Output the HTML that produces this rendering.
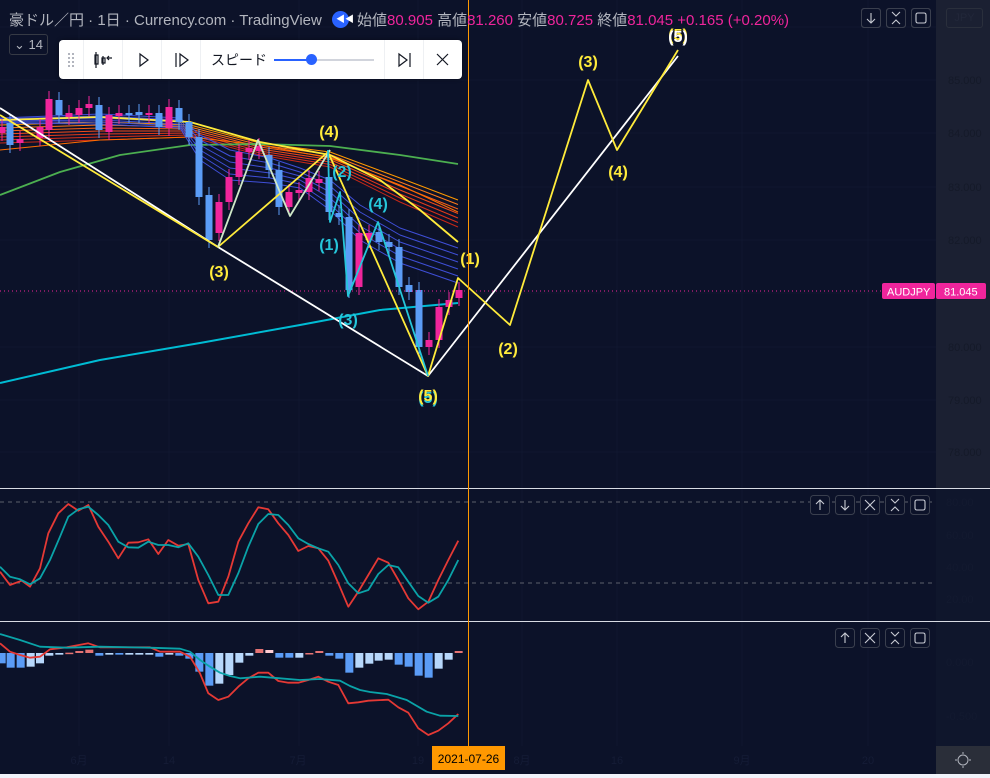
<!DOCTYPE html>
<html><head><meta charset="utf-8"><style>
html,body{margin:0;padding:0;background:#0c1229;width:990px;height:778px;overflow:hidden;font-family:"Liberation Sans","Noto Sans CJK JP",sans-serif}
#w{position:relative;width:990px;height:778px}
svg{position:absolute;left:0;top:0}
.leg{position:absolute;left:9px;top:9px;color:#b2b5be;font-size:15px;white-space:nowrap;letter-spacing:0}
.leg .p{color:#f0259c}
.tb{position:absolute;left:59px;top:40px;width:403px;height:39px;background:#fff;border-radius:4px;box-shadow:0 0 4px rgba(0,0,0,.4)}
.btn{position:absolute;width:18px;height:18px;border:1px solid #3a3f4e;border-radius:3px}
</style></head><body><div id="w">
<svg id="s" width="990" height="778" viewBox="0 0 990 778" xmlns="http://www.w3.org/2000/svg"></svg>
<div class="leg">豪ドル／円 · 1日 · Currency.com · TradingView <span style="display:inline-block;width:17px;height:17px;border-radius:50%;background:#2962ff;vertical-align:-3px;margin:0 8px 0 6px;position:relative"><span style="position:absolute;left:4px;top:4px;font-size:9px;color:#fff;line-height:9px">◀◀</span></span>始値<span class="p">80.905</span> 高値<span class="p">81.260</span> 安値<span class="p">80.725</span> 終値<span class="p">81.045</span> <span class="p">+0.165 (+0.20%)</span></div>
<div style="position:absolute;left:9px;top:34px;width:37px;height:19px;border:1px solid #363a45;border-radius:3px;color:#b2b5be;font-size:13px;line-height:19px;text-align:center">⌄ 14</div>
<div class="tb">
<div style="position:absolute;left:24px;top:0;width:1px;height:39px;background:#eef0f3"></div>
<div style="position:absolute;left:63px;top:0;width:1px;height:39px;background:#eef0f3"></div>
<div style="position:absolute;left:102px;top:0;width:1px;height:39px;background:#eef0f3"></div>
<div style="position:absolute;left:141px;top:0;width:1px;height:39px;background:#eef0f3"></div>
<div style="position:absolute;left:325px;top:0;width:1px;height:39px;background:#eef0f3"></div>
<div style="position:absolute;left:364px;top:0;width:1px;height:39px;background:#eef0f3"></div>
<div style="position:absolute;left:152px;top:10px;font-size:14px;color:#131722">スピード</div>
<div style="position:absolute;left:215px;top:19px;width:100px;height:2px;background:#d1d4dc"></div>
<div style="position:absolute;left:215px;top:19px;width:38px;height:2px;background:#2962ff"></div>
<div style="position:absolute;left:247px;top:14px;width:11px;height:11px;border-radius:50%;background:#2962ff"></div>
<svg width="403" height="39" style="position:absolute;left:0;top:0" fill="none" stroke="#131722" stroke-width="1.2">
<g stroke="#b2b5be" stroke-width="2" stroke-dasharray="2 2"><path d="M10 13v14M14 13v14"/></g>
<path d="M37 12v16M36 15h3v9h-3zM44 16v9M43 18h3v5h-3zM49 18h4M50 16l-2 2 2 2"/>
<path d="M81 14l8 6-8 6z"/>
<path d="M117 13v14M121 14l8 6-8 6z"/>
<path d="M340 14l8 6-8 6zM351 13v14"/>
<path d="M378 14l11 11M389 14l-11 11"/>
</svg>
</div>
<div class="btn" style="left:861px;top:8px"></div><div class="btn" style="left:886px;top:8px"></div><div class="btn" style="left:911px;top:8px"></div>
<div class="btn" style="left:946px;top:8px;width:35px;border-color:#2a2f3c;color:#22273a;font-size:11px;line-height:18px;text-align:center">JPY</div>
</div>
<script>
const s=document.getElementById('s');let h='';
const P=(pts,c,w,sc,ox,oy,ex)=>{let d=pts.map((p,i)=>(i?'L':'M')+(p[0]/(sc||1)+(ox||0)).toFixed(1)+' '+(p[1]/(sc||1)+(oy||0)).toFixed(1)).join('');h+=`<path d="${d}" fill="none" stroke="${c}" stroke-width="${w}" stroke-linejoin="round" ${ex||''}/>`};
h+='<rect x="936" y="0" width="54" height="488" fill="#1b2032"/><rect x="936" y="489" width="54" height="257" fill="#0f162c"/>';
h+='<rect x="936" y="746" width="54" height="28" fill="#2a2e39"/><rect x="0" y="774" width="990" height="4" fill="#f0f3fa"/>';
[79,169,299,418,522,617,742,868].forEach(x=>h+=`<line x1="${x}" y1="0" x2="${x}" y2="746" stroke="#10172f" stroke-width="1"/>`);
[27,80,133,187,240,293,347,400,452].forEach(y=>h+=`<line x1="0" y1="${y}" x2="936" y2="${y}" stroke="#10172f"/>`);
[[85,80],[84,133],[83,187],[82,240],[80,347],[79,400],[78,452]].forEach(a=>h+=`<text x="948" y="${a[1]+4}" font-size="11" fill="#151a29">${a[0]}.000</text>`);
[['80.00',506],['60.00',539],['40.00',571],['20.00',603],['0.000',666],['-0.500',720]].forEach(a=>h+=`<text x="946" y="${a[1]}" font-size="11" fill="#131a30">${a[0]}</text>`);
[['6月',79],['14',169],['7月',298],['19',418],['8月',522],['16',617],['9月',742],['20',868]].forEach(a=>h+=`<text x="${a[1]}" y="764" font-size="11" fill="#151c36" text-anchor="middle">${a[0]}</text>`);
h+='<line x1="0" y1="488.5" x2="990" y2="488.5" stroke="#d8dbe3"/><line x1="0" y1="621.5" x2="990" y2="621.5" stroke="#d8dbe3"/>';
h+='<line x1="0" y1="502" x2="936" y2="502" stroke="#5d606b" stroke-dasharray="4 4"/><line x1="0" y1="583" x2="936" y2="583" stroke="#5d606b" stroke-dasharray="4 4"/>';
const oc=['#ff9800','#ff7a1a','#f5601a','#f04a1a','#e63a1a','#d8301a','#c82818'];
for(let i=0;i<7;i++){P([[0,125+i*3],[100,122+i*3],[190,125+i*2],[260,143+i*2],[330,152+i*2.5],[400,178+i*4],[458,200+i*4.5]],oc[i],1)}
P([[0,150],[100,140],[190,137],[260,145],[330,158],[400,185],[458,212]],'#ff6d00',1);
P([[0,195],[60,172],[120,155],[190,145],[260,144],[330,146],[400,155],[458,164]],'#4caf50',1.8);
for(let i=0;i<6;i++){P([[0,118+i],[100,114+i*2],[180,118+i*2],[200,135+i*5],[230,150+i*6],[270,158+i*5],[300,168+i*4],[330,180+i*6],[360,205+i*7],[400,228+i*7],[458,248+i*7]],'#3f4fd8',1)}
P([[0,383],[100,360],[200,343],[300,325],[380,310],[458,303]],'#00bcd4',2);
P([[0,120],[100,117],[190,122],[260,142],[330,155],[380,180],[420,210],[458,242]],'#ffeb3b',1.8);
const C=[[2,127,133,1],[10,123,145,0],[20,139,143,1],[40,127,138,1],[49,99,130,1],[59,100,115,0],[69,113,117,1],[79,108,115,1],[89,104,108,1],[99,105,130,0],[109,115,132,1],[119,113,116,1],[129,113,115,0],[139,112,115,0],[149,113,115,1],[159,113,127,0],[169,107,128,1],[179,108,122,0],[189,122,137,0],[199,137,197,0],[209,195,240,0],[219,202,233,1],[229,177,202,1],[239,152,177,1],[249,148,152,1],[259,146,151,1],[269,155,170,0],[279,170,207,0],[289,192,207,1],[299,190,193,1],[309,178,192,1],[319,179,183,1],[329,177,212,0],[339,213,217,0],[349,217,290,0],[359,233,287,1],[369,233,240,1],[379,232,242,0],[389,242,247,0],[399,247,287,0],[409,285,292,0],[419,290,347,0],[429,340,347,1],[439,307,340,1],[449,300,307,1],[459,290,298,1]];
C.forEach(c=>{const col=c[3]?'#f0259c':'#5b9cf6';h+=`<line x1="${c[0]}" y1="${c[1]-8}" x2="${c[0]}" y2="${c[2]+8}" stroke="${col}"/><rect x="${c[0]-3.5}" y="${c[1]}" width="7" height="${Math.max(2,c[2]-c[1])}" fill="${col}"/>`});
h+='<line x1="0" y1="291" x2="882" y2="291" stroke="#f0259c" stroke-dasharray="1 3"/>';
h+='<rect x="882" y="283" width="53" height="16" rx="2" fill="#f0259c"/><rect x="936" y="283" width="50" height="16" rx="2" fill="#f0259c"/><text x="887" y="295.5" font-size="11" fill="#fff">AUDJPY</text><text x="944" y="295.5" font-size="11" fill="#fff">81.045</text>';
P([[0,108],[218,247],[428,376],[678,56]],'#ffffff',1.8);
P([[0,115],[218,247],[328,152],[428,376],[458,278],[510,325],[588,80],[617,150],[678,50]],'#ffeb3b',1.8);
P([[218,247],[258,140],[290,216],[330,150]],'#cfe8c8',1.8);
P([[328,150],[330,222],[340,192],[348,296],[378,222],[428,376]],'#26c6da',1.8);
const L=(t,x,y,c)=>h+=`<text x="${x}" y="${y}" font-size="16" font-weight="bold" fill="${c}" text-anchor="middle">${t}</text>`;
L('(3)',219,277,'#ffeb3b');L('(4)',329,137,'#ffeb3b');L('(1)',470,264,'#ffeb3b');L('(2)',508,354,'#ffeb3b');L('(3)',588,67,'#ffeb3b');L('(4)',618,177,'#ffeb3b');L('(5)',678,40,'#ffeb3b');L('(5)',678,42,'#ffffff');
L('(2)',342,177,'#26c6da');L('(4)',378,209,'#26c6da');L('(1)',329,250,'#26c6da');L('(3)',348,325,'#26c6da');L('(5)',428,403,'#26c6da');L('(5)',428,401,'#ffeb3b');
const R=[[0,245],[30,285],[65,272],[90,290],[120,235],[145,130],[175,70],[205,42],[235,62],[265,45],[295,110],[325,155],[355,205],[385,158],[415,157],[445,148],[475,192],[505,150],[535,167],[565,162],[595,270],[625,340],[655,335],[685,260],[715,155],[745,100],[775,52],[805,58],[835,100],[865,135],[895,183],[925,168],[955,175],[985,212],[1015,280],[1045,350],[1075,305],[1105,255],[1135,205],[1165,218],[1195,270],[1225,325],[1255,358],[1285,335],[1315,270],[1345,210],[1375,152]];
const T=[[0,230],[30,260],[60,268],[90,283],[120,265],[150,210],[180,140],[205,80],[235,58],[265,50],[295,75],[325,105],[355,155],[385,172],[415,173],[445,155],[475,165],[505,165],[535,172],[565,160],[595,200],[625,255],[655,315],[685,315],[715,250],[745,170],[775,102],[805,72],[835,75],[865,105],[895,145],[925,162],[955,175],[985,185],[1015,225],[1045,280],[1075,310],[1105,300],[1135,252],[1165,225],[1195,232],[1225,275],[1255,318],[1285,338],[1315,320],[1345,270],[1375,210]];
P(R,'#e53935',1.8,3,0,490);P(T,'#0aa3a8',1.8,3,0,490);
const H=[[5,520,0],[32,533,0],[62,533,0],[92,530,1],[120,520,1],[148,497,1],[178,494,1],[208,488,2],[238,483,2],[268,479,2],[298,497,0],[328,494,1],[358,494,0],[388,494,1],[418,494,1],[448,494,1],[478,500,0],[508,494,1],[538,497,0],[568,506,0],[598,545,0],[628,587,0],[658,581,1],[688,555,1],[718,518,1],[748,497,1],[778,477,2],[808,480,3],[838,503,0],[868,503,0],[898,503,1],[928,490,2],[958,483,2],[988,497,0],[1018,506,0],[1048,548,0],[1078,533,1],[1108,521,1],[1136,512,1],[1166,509,1],[1196,524,0],[1226,530,0],[1256,557,0],[1286,563,0],[1316,536,1],[1346,509,1],[1376,483,2]];
H.forEach(b=>{const x=b[0]/3,y=b[1]/3+490,z=653,col=['#5b9cf6','#b7d7fb','#e57373','#ffcdd2'][b[2]];const t=Math.min(y,z),hh=Math.max(1.5,Math.abs(y-z));h+=`<rect x="${x-4}" y="${t}" width="8" height="${hh}" fill="${col}"/>`});
P([[0,460],[30,485],[60,495],[90,503],[120,500],[150,478],[200,472],[265,460],[300,472],[450,472],[480,485],[540,485],[570,500],[600,550],[625,610],[655,630],[685,620],[715,590],[745,565],[775,548],[805,548],[835,573],[865,578],[895,578],[925,570],[955,560],[985,575],[1015,585],[1045,640],[1075,637],[1105,632],[1165,629],[1195,652],[1225,668],[1255,715],[1285,735],[1315,722],[1345,700],[1375,672]],'#e53935',1.8,3,0,490);
P([[0,432],[60,450],[120,470],[200,473],[300,470],[450,473],[540,476],[570,485],[600,510],[630,530],[660,548],[690,558],[720,565],[780,560],[840,565],[900,570],[960,567],[1020,572],[1050,588],[1080,600],[1110,606],[1160,612],[1220,630],[1280,665],[1320,677],[1375,678]],'#0aa3a8',1.8,3,0,490);
h+='<line x1="468.5" y1="0" x2="468.5" y2="746" stroke="#ff9800"/><rect x="432" y="746" width="73" height="24" fill="#ff9800"/><text x="468.5" y="763" font-size="12" fill="#000" text-anchor="middle">2021-07-26</text>';
const B=(x,y,ic)=>{h+=`<rect x="${x+.5}" y="${y+.5}" width="19" height="19" rx="3" fill="#0c1229" stroke="#3a3f4e"/><path d="${ic}" transform="translate(${x},${y})" fill="none" stroke="#c8cbd3" stroke-width="1.1"/>`};
const up='M10 5v10M6 9l4-4 4 4',dn='M10 5v10M6 11l4 4 4-4',xx='M5 5l10 10M15 5L5 15',col='M6 4l4 4 4-4M6 16l4-4 4 4',mx='M5 7q0-2 2-2h6q2 0 2 2M5 13q0 2 2 2h6q2 0 2-2M5 7v6M15 7v6';
B(861,8,dn);B(886,8,col);B(911,8,mx);
B(810,495,up);B(835,495,dn);B(860,495,xx);B(885,495,col);B(910,495,mx);
B(835,628,up);B(860,628,xx);B(885,628,col);B(910,628,mx);
h+='<circle cx="963" cy="760" r="5" fill="none" stroke="#b2b5be"/><path d="M963 752v2M963 766v2M955 760h2M969 760h2" stroke="#b2b5be"/>';
s.innerHTML=h;
</script>
</body></html>
